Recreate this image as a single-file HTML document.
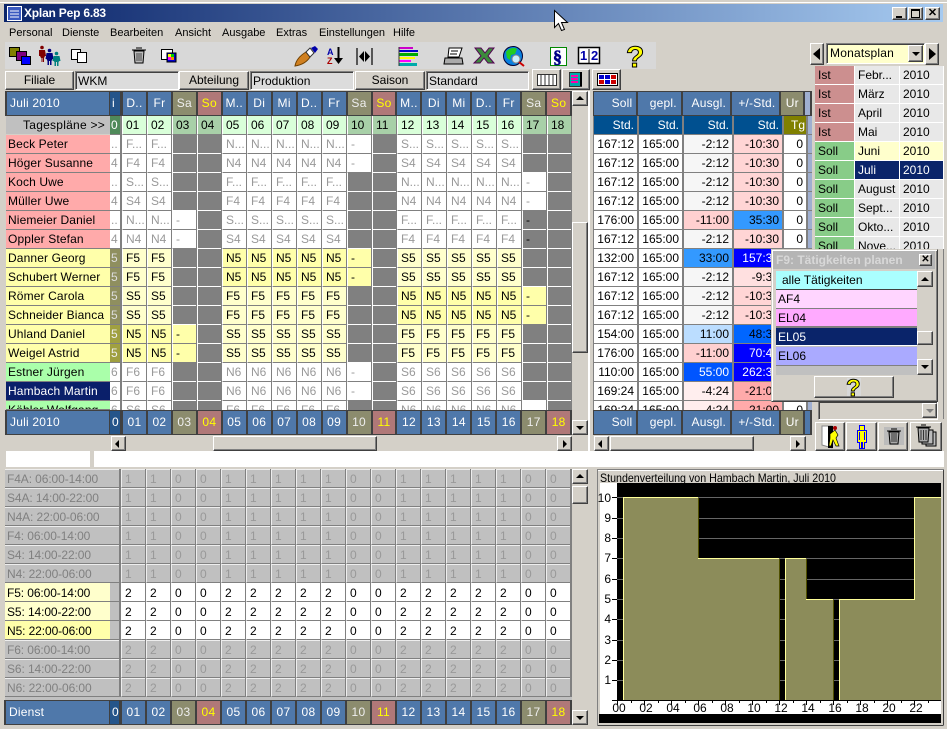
<!DOCTYPE html>
<html><head><meta charset="utf-8"><title>Xplan Pep 6.83</title>
<style>
*{box-sizing:border-box;margin:0;padding:0}
html,body{width:947px;height:729px;overflow:hidden;background:#d4d0c8;font:12px/18px "Liberation Sans",sans-serif;color:#000}
.p{position:absolute}
.btn{position:absolute;background:#d4d0c8;border:1px solid;border-color:#fff #404040 #404040 #fff;box-shadow:inset -1px -1px #808080;text-align:center}
.sunk{position:absolute;background:#dcdcdc;border:1px solid;border-color:#808080 #fff #fff #808080;box-shadow:inset 1px 1px #404040;padding-left:2px}
.m{position:absolute;top:24px;font-size:11px}
.r{position:absolute;display:flex;left:0;height:19px}
.r i{font-style:normal;display:block;width:24px;margin-right:1px;height:19px;background:#fff;border-left:1px solid #fff;border-bottom:1px solid #808080;color:#999;padding-left:3px;overflow:hidden;white-space:nowrap;line-height:18px}
.r i.c{width:10px;margin-right:2px;padding-left:1px;border-left:0}
.r i.g{background:#808080;border-bottom-color:#fff;color:#000}
.r i.a{background:#ffffcc;color:#000}
.r i.n{background:#ffffaa;color:#000}
.r i.d{background:#d9ffd9;color:#000}
.r i.e{background:#a8d0a8;color:#000;border-bottom-color:#808080}
.r i.o{background:#8f8f5f;color:#ddd}
.r i.q{background:#a0a040;color:#eee}
.r i.f{background:#4f8a5a;color:#fff}
.hd{position:absolute;display:flex;background:#404040;height:25px;padding-top:1px}
.hd i{font-style:normal;display:block;width:23px;margin-right:2px;height:23px;background:#4f78aa;color:#fff;text-align:center;line-height:22px;overflow:hidden;white-space:nowrap;letter-spacing:.3px}
.hd i.c{width:10px;margin-right:3px;background:#25558a;text-align:left;padding-left:2px}
.hd i.s{background:#8c8c6e;color:#eee}
.hd i.u{background:#b07878;color:#ff0}
.nm{position:absolute;left:6px;width:104px;height:19px;padding-left:2px;border-bottom:1px solid #808080;line-height:18px;overflow:hidden;white-space:nowrap;letter-spacing:.13px}
.t{position:absolute;display:flex;left:0;height:19px}
.t i{font-style:normal;display:block;height:19px;margin-right:2px;background:#fff;border-bottom:1px solid #808080;text-align:right;padding-right:3px;line-height:18px;overflow:hidden;white-space:nowrap}
.w1{width:43px}.w2{width:43px}.w3{width:48px}.w4{width:48px}.w5{width:22px}.w6{width:5px;background:#9fafd0!important;padding:0!important}
.hr{position:absolute;display:flex;background:#404040;height:25px;padding-top:1px;left:593px;width:219px;padding-left:1px}
.hr i{font-style:normal;display:block;height:23px;margin-right:2px;background:#4f78aa;color:#fff;text-align:right;padding-right:4px;line-height:22px;letter-spacing:.2px}
.mc{position:absolute;height:18px;line-height:19px;padding-left:3px;white-space:nowrap;overflow:hidden}
.ll{position:absolute;left:5px;width:105px;height:19px;background:#c0c0c0;color:#808080;padding-left:2px;border-bottom:1px solid #808080;box-shadow:inset 0 1px #eee;line-height:20px;white-space:nowrap;letter-spacing:-.1px}
.ll.y{box-shadow:none;color:#000}
.lr{position:absolute;display:flex;left:110px;height:19px}
.lr i{font-style:normal;display:block;width:24px;margin-right:1px;height:19px;background:#c0c0c0;color:#999;border-left:1px solid #eee;border-bottom:1px solid #808080;box-shadow:inset 0 1px #eee;padding-left:3px;line-height:20px}
.lr i.c{width:9px;margin-right:2px;border-left:0}
.lr.b i{background:#fff;color:#000;border-left-color:#fff;box-shadow:none}
.lr.b i.c{background:#c0c0c0}
.li{position:absolute;left:0;width:141px;height:19px;padding-left:2px;border-bottom:1px solid #808080;line-height:19px}
.tri{position:absolute;width:0;height:0;border-style:solid}
</style></head><body>
<div class="p" style="left:0;top:0;width:947px;height:2px;background:#d4d0c8"></div>
<div class="p" style="left:0;top:2px;width:947px;height:1px;background:#fff"></div>
<div class="p" style="left:4px;top:4px;width:939px;height:18px;background:linear-gradient(90deg,#0a246a,#a6caf0)"></div>
<svg class="p" style="left:7px;top:6px" width="15" height="15"><rect x=".5" y=".5" width="14" height="14" fill="#3a5ac0" stroke="#fff"/><path d="M3 5h9M3 8h9M3 11h9" stroke="#fff"/></svg>
<div class="p" style="left:24px;top:4px;color:#fff;font-weight:bold;font-size:12px;letter-spacing:-.2px;line-height:18px">Xplan Pep 6.83</div>
<div class="btn" style="left:892px;top:7px;width:15px;height:13px"><div class="p" style="left:3px;top:8px;width:6px;height:2px;background:#000"></div></div>
<div class="btn" style="left:908px;top:7px;width:15px;height:13px"><div class="p" style="left:2px;top:1px;width:9px;height:9px;border:1px solid #000;border-top-width:2px"></div></div>
<div class="btn" style="left:925px;top:7px;width:15px;height:13px;line-height:10px;font-weight:bold;font-size:11px">✕</div>
<div class="m" style="left:9px">Personal</div><div class="m" style="left:62px">Dienste</div><div class="m" style="left:110px">Bearbeiten</div><div class="m" style="left:175px">Ansicht</div><div class="m" style="left:222px">Ausgabe</div><div class="m" style="left:276px">Extras</div><div class="m" style="left:319px">Einstellungen</div><div class="m" style="left:393px">Hilfe</div>

<div class="p" style="left:5px;top:42px;width:651px;height:27px;background:#d8d8d8"></div>
<svg class="p" style="left:0;top:40px" width="660" height="30" viewBox="0 40 660 30">
<rect x="9.500" y="47.500" width="10" height="9" fill="#808000" stroke="#000"/><rect x="16.500" y="51.500" width="10" height="9" fill="#800080" stroke="#000"/><rect x="21.500" y="56.500" width="9" height="8" fill="#00f" stroke="#000"/>
<g><g fill="#800000"><circle cx="42" cy="47.500" r="1.800"/><path d="M39 50h6l1 6h-1l-1 2v4h-1.500v-4h-1v4H41v-4l-1-2h-1z"/></g>
<g fill="#000080"><circle cx="49.500" cy="50.500" r="1.800"/><path d="M46.500 53h6l1 6h-1l-1 2v4H50v-4h-1v4h-1.500v-4l-1-2h-1z"/></g>
<g fill="#008080"><circle cx="56.500" cy="53.500" r="1.800"/><path d="M53.500 56h6l1 5h-1l-1 1v4H57v-4h-1v4h-1.500v-4l-1-1h-1z"/></g></g>
<rect x="71.500" y="49.500" width="9" height="10" fill="#fff" stroke="#000"/><rect x="77.500" y="52.500" width="9" height="10" fill="#fff" stroke="#000"/>
<path d="M134 51h10l-1 12h-8zM132 50h14M136 48h6" fill="#bbb" stroke="#000"/><path d="M137 53v8M139 53v8M141 53v8" stroke="#444"/>
<rect x="161.500" y="49.500" width="11" height="10" fill="#fff" stroke="#000"/><rect x="167" y="53" width="9" height="9" fill="#00c" stroke="#000"/><rect x="168" y="54" width="3" height="3" fill="#ff0"/><rect x="171" y="54" width="3" height="3" fill="#0c0"/><rect x="168" y="57" width="3" height="3" fill="#f0f"/><rect x="171" y="57" width="3" height="3" fill="#f80"/>
<path d="M295 66c1-6 6-11 11-14l4 5c-3 5-9 8-15 9z" fill="#d08020" stroke="#704000"/><path d="M306 52l4-4 4 5-4 4z" fill="#fff" stroke="#333"/><path d="M311 48l4-2 3 3-3 4z" fill="#00a"/>
<text x="327" y="55" font-size="9" font-family="Liberation Sans" font-weight="bold" fill="#00a">A</text><text x="327" y="64" font-size="9" font-family="Liberation Sans" font-weight="bold" fill="#a00">Z</text><path d="M338.500 47v12" stroke="#000" stroke-width="2"/><path d="M334 58h9l-4.500 6z"/>
<path d="M357 48v17M372 48v17" stroke="#000" stroke-width="1.200"/><path d="M359 56.500l5-5.500v11zM370 56.500l-5-5.500v11z"/>
<path d="M399 47h14v2h-14z" fill="#c0c"/><path d="M399 50h19v2h-19z" fill="#00c"/><path d="M399 53h19v3h-19z" fill="#0a0"/><path d="M399 57h16v2h-16z" fill="#ff0"/><path d="M399 60h12v2h-12z" fill="#f0f"/><path d="M399 63h18v3h-18z" fill="#0aa"/><path d="M399 47v19" stroke="#333"/>
<path d="M449 48h13l-3 9h-11z" fill="#fff" stroke="#000"/><path d="M445 58h17l1 6h-19z" fill="#aaa" stroke="#000"/><path d="M451 51h7M450 54h7" stroke="#000"/>
<path d="M475 48h6l4 5 4-5h5l-6 8 6 7h-6l-4-5-4 5h-6l7-7z" fill="#3c8a3c" stroke="#505"/>
<circle cx="513" cy="56" r="9.500" fill="#0a80e0" stroke="#003"/><path d="M506 52c3-4 8-5 11-3l-2 5-4 1-1 5-3-2z" fill="#2c2"/><circle cx="516" cy="59" r="4" fill="#cef" stroke="#888"/><path d="M519 62l5 4" stroke="#c00" stroke-width="2"/>
<rect x="550.500" y="47.500" width="16" height="18" fill="#fff" stroke="#080"/><text x="553" y="63" font-size="18" font-weight="bold" font-family="Liberation Serif" fill="#008" stroke="#008" stroke-width=".6">§</text>
<rect x="578.500" y="47.500" width="21" height="16" fill="#fff" stroke="#000" stroke-width="1.500"/><text x="580" y="60" font-size="13" font-family="Liberation Sans" font-weight="bold" fill="#00a">1</text><text x="591" y="60" font-size="13" font-family="Liberation Sans" font-weight="bold" fill="#00a">2</text><path d="M589 49v14" stroke="#000"/>
<text x="626" y="67" font-size="30" font-weight="bold" font-family="Liberation Sans" fill="#ff0" stroke="#000" stroke-width="1">?</text>
</svg>

<div class="btn" style="left:5px;top:71px;width:69px;height:19px;line-height:16px">Filiale</div>
<div class="sunk" style="left:75px;top:71px;width:104px;height:19px;line-height:18px">WKM</div>
<div class="btn" style="left:179px;top:71px;width:70px;height:19px;line-height:16px">Abteilung</div>
<div class="sunk" style="left:250px;top:71px;width:104px;height:19px;line-height:18px">Produktion</div>
<div class="btn" style="left:355px;top:71px;width:70px;height:19px;line-height:16px">Saison</div>
<div class="sunk" style="left:426px;top:71px;width:103px;height:19px;line-height:18px">Standard</div>
<div class="btn" style="left:532px;top:69px;width:29px;height:21px"><svg width="26" height="16" style="position:absolute;left:1px;top:2px"><rect x="3.500" y="2.500" width="19" height="11" fill="#fff" stroke="#333"/><path d="M7 3v10M11 3v10M15 3v10M19 3v10" stroke="#333"/></svg></div>
<div class="btn" style="left:562px;top:69px;width:28px;height:21px"><svg width="24" height="17" style="position:absolute;left:1px;top:1px"><rect x="5.500" y="1.500" width="12" height="14" fill="#0aa" stroke="#333"/><path d="M7 5h7M7 8h7M7 11h7" stroke="#f0a" stroke-width="2"/><path d="M17 1v14" stroke="#000" stroke-width="2"/></svg></div>
<div class="btn" style="left:592px;top:69px;width:29px;height:21px"><svg width="26" height="17" style="position:absolute;left:1px;top:1px"><rect x="3.500" y="2.500" width="20" height="12" fill="#fff" stroke="#000"/><path d="M5 4h5v4H5zM11 4h5v4h-5z" fill="#00c"/><path d="M17 4h5v4h-5zM5 9h5v4H5zM17 9h5v4h-5z" fill="#c00"/><path d="M11 9h5v4h-5z" fill="#00c"/></svg></div>

<!-- top grid -->
<div class="p" style="left:5px;top:91px;width:106px;height:25px;background:#404040"></div>
<div class="p" style="left:7px;top:92px;width:102px;height:23px;background:#4f78aa;color:#fff;padding-left:3px;line-height:22px;letter-spacing:.2px">Juli 2010</div>
<div class="p" style="left:6px;top:116px;width:104px;height:18px;background:#c0c0c0;text-align:right;padding-right:5px;line-height:18px;letter-spacing:.25px">Tagespläne &gt;&gt;</div>
<div class="nm" style="top:135px;background:#ffaaaa">Beck Peter</div>
<div class="nm" style="top:154px;background:#ffaaaa">Höger Susanne</div>
<div class="nm" style="top:173px;background:#ffaaaa">Koch Uwe</div>
<div class="nm" style="top:192px;background:#ffaaaa">Müller Uwe</div>
<div class="nm" style="top:211px;background:#ffaaaa">Niemeier Daniel</div>
<div class="nm" style="top:230px;background:#ffaaaa">Oppler Stefan</div>
<div class="nm" style="top:249px;background:#ffffaa">Danner Georg</div>
<div class="nm" style="top:268px;background:#ffffaa">Schubert Werner</div>
<div class="nm" style="top:287px;background:#ffffaa">Römer Carola</div>
<div class="nm" style="top:306px;background:#ffffaa">Schneider Bianca</div>
<div class="nm" style="top:325px;background:#ffffaa">Uhland Daniel</div>
<div class="nm" style="top:344px;background:#ffffaa">Weigel Astrid</div>
<div class="nm" style="top:363px;background:#aaffaa">Estner Jürgen</div>
<div class="nm" style="top:382px;background:#0a1f6a;color:#fff">Hambach Martin</div>
<div class="nm" style="top:401px;background:#aaffaa;height:9px">Köhler Wolfgang</div>

<div class="p" style="left:110px;top:91px;width:462px;height:319px;background:#808080;overflow:hidden">
<div class="hd" style="top:0;left:0;width:462px"><i class="c">i</i><i>D..</i><i>Fr</i><i class="s">Sa</i><i class="u">So</i><i>M..</i><i>Di</i><i>Mi</i><i>D..</i><i>Fr</i><i class="s">Sa</i><i class="u">So</i><i>M..</i><i>Di</i><i>Mi</i><i>D..</i><i>Fr</i><i class="s">Sa</i><i class="u">So</i></div>
<div class="r" style="top:25px"><i class="c f">0</i><i class="d">01</i><i class="d">02</i><i class="e">03</i><i class="e">04</i><i class="d">05</i><i class="d">06</i><i class="d">07</i><i class="d">08</i><i class="d">09</i><i class="e">10</i><i class="e">11</i><i class="d">12</i><i class="d">13</i><i class="d">14</i><i class="d">15</i><i class="d">16</i><i class="e">17</i><i class="e">18</i></div>
<div class="r" style="top:44px"><i class="c">..</i><i>F...</i><i>F...</i><i class="g"></i><i class="g"></i><i>N...</i><i>N...</i><i>N...</i><i>N...</i><i>N...</i><i>-</i><i class="g"></i><i>S...</i><i>S...</i><i>S...</i><i>S...</i><i>S...</i><i class="g"></i><i class="g"></i></div>
<div class="r" style="top:63px"><i class="c">4</i><i>F4</i><i>F4</i><i class="g"></i><i class="g"></i><i>N4</i><i>N4</i><i>N4</i><i>N4</i><i>N4</i><i>-</i><i class="g"></i><i>S4</i><i>S4</i><i>S4</i><i>S4</i><i>S4</i><i class="g"></i><i class="g"></i></div>
<div class="r" style="top:82px"><i class="c">..</i><i>S...</i><i>S...</i><i class="g"></i><i class="g"></i><i>F...</i><i>F...</i><i>F...</i><i>F...</i><i>F...</i><i class="g"></i><i class="g"></i><i>N...</i><i>N...</i><i>N...</i><i>N...</i><i>N...</i><i>-</i><i class="g"></i></div>
<div class="r" style="top:101px"><i class="c">4</i><i>S4</i><i>S4</i><i class="g"></i><i class="g"></i><i>F4</i><i>F4</i><i>F4</i><i>F4</i><i>F4</i><i class="g"></i><i class="g"></i><i>N4</i><i>N4</i><i>N4</i><i>N4</i><i>N4</i><i>-</i><i class="g"></i></div>
<div class="r" style="top:120px"><i class="c">..</i><i>N...</i><i>N...</i><i>-</i><i class="g"></i><i>S...</i><i>S...</i><i>S...</i><i>S...</i><i>S...</i><i class="g"></i><i class="g"></i><i>F...</i><i>F...</i><i>F...</i><i>F...</i><i>F...</i><i class="g">-</i><i class="g"></i></div>
<div class="r" style="top:139px"><i class="c">4</i><i>N4</i><i>N4</i><i>-</i><i class="g"></i><i>S4</i><i>S4</i><i>S4</i><i>S4</i><i>S4</i><i class="g"></i><i class="g"></i><i>F4</i><i>F4</i><i>F4</i><i>F4</i><i>F4</i><i class="g">-</i><i class="g"></i></div>
<div class="r" style="top:158px"><i class="c o">5</i><i class="a">F5</i><i class="a">F5</i><i class="g"></i><i class="g"></i><i class="n">N5</i><i class="n">N5</i><i class="n">N5</i><i class="n">N5</i><i class="n">N5</i><i class="n">-</i><i class="g"></i><i class="a">S5</i><i class="a">S5</i><i class="a">S5</i><i class="a">S5</i><i class="a">S5</i><i class="g"></i><i class="g"></i></div>
<div class="r" style="top:177px"><i class="c o">5</i><i class="a">F5</i><i class="a">F5</i><i class="g"></i><i class="g"></i><i class="n">N5</i><i class="n">N5</i><i class="n">N5</i><i class="n">N5</i><i class="n">N5</i><i class="n">-</i><i class="g"></i><i class="a">S5</i><i class="a">S5</i><i class="a">S5</i><i class="a">S5</i><i class="a">S5</i><i class="g"></i><i class="g"></i></div>
<div class="r" style="top:196px"><i class="c o">5</i><i class="a">S5</i><i class="a">S5</i><i class="g"></i><i class="g"></i><i class="a">F5</i><i class="a">F5</i><i class="a">F5</i><i class="a">F5</i><i class="a">F5</i><i class="g"></i><i class="g"></i><i class="n">N5</i><i class="n">N5</i><i class="n">N5</i><i class="n">N5</i><i class="n">N5</i><i class="n">-</i><i class="g"></i></div>
<div class="r" style="top:215px"><i class="c o">5</i><i class="a">S5</i><i class="a">S5</i><i class="g"></i><i class="g"></i><i class="a">F5</i><i class="a">F5</i><i class="a">F5</i><i class="a">F5</i><i class="a">F5</i><i class="g"></i><i class="g"></i><i class="n">N5</i><i class="n">N5</i><i class="n">N5</i><i class="n">N5</i><i class="n">N5</i><i class="n">-</i><i class="g"></i></div>
<div class="r" style="top:234px"><i class="c q">5</i><i class="n">N5</i><i class="n">N5</i><i class="n">-</i><i class="g"></i><i class="a">S5</i><i class="a">S5</i><i class="a">S5</i><i class="a">S5</i><i class="a">S5</i><i class="g"></i><i class="g"></i><i class="a">F5</i><i class="a">F5</i><i class="a">F5</i><i class="a">F5</i><i class="a">F5</i><i class="g"></i><i class="g"></i></div>
<div class="r" style="top:253px"><i class="c q">5</i><i class="n">N5</i><i class="n">N5</i><i class="n">-</i><i class="g"></i><i class="a">S5</i><i class="a">S5</i><i class="a">S5</i><i class="a">S5</i><i class="a">S5</i><i class="g"></i><i class="g"></i><i class="a">F5</i><i class="a">F5</i><i class="a">F5</i><i class="a">F5</i><i class="a">F5</i><i class="g"></i><i class="g"></i></div>
<div class="r" style="top:272px"><i class="c">6</i><i>F6</i><i>F6</i><i class="g"></i><i class="g"></i><i>N6</i><i>N6</i><i>N6</i><i>N6</i><i>N6</i><i>-</i><i class="g"></i><i>S6</i><i>S6</i><i>S6</i><i>S6</i><i>S6</i><i class="g"></i><i class="g"></i></div>
<div class="r" style="top:291px"><i class="c">6</i><i>F6</i><i>F6</i><i class="g"></i><i class="g"></i><i>N6</i><i>N6</i><i>N6</i><i>N6</i><i>N6</i><i>-</i><i class="g"></i><i>S6</i><i>S6</i><i>S6</i><i>S6</i><i>S6</i><i class="g"></i><i class="g"></i></div>
<div class="r" style="top:310px"><i class="c">6</i><i>S6</i><i>S6</i><i class="g"></i><i class="g"></i><i>F6</i><i>F6</i><i>F6</i><i>F6</i><i>F6</i><i class="g"></i><i class="g"></i><i>N6</i><i>N6</i><i>N6</i><i>N6</i><i>N6</i><i></i><i class="g"></i></div>
</div>
<div class="p" style="left:5px;top:410px;width:106px;height:25px;background:#404040"></div>
<div class="p" style="left:7px;top:411px;width:102px;height:23px;background:#4f78aa;color:#fff;padding-left:3px;line-height:22px;letter-spacing:.2px">Juli 2010</div>
<div class="hd" style="top:410px;left:110px;width:462px"><i class="c">0</i><i>01</i><i>02</i><i class="s">03</i><i class="u">04</i><i>05</i><i>06</i><i>07</i><i>08</i><i>09</i><i class="s">10</i><i class="u">11</i><i>12</i><i>13</i><i>14</i><i>15</i><i>16</i><i class="s">17</i><i class="u">18</i></div>

<!-- vertical scrollbar top -->
<div class="btn" style="left:572px;top:91px;width:16px;height:15px"><div class="tri" style="left:3px;top:4px;border-width:0 4px 4px;border-color:transparent transparent #000"></div></div>
<div class="btn" style="left:572px;top:222px;width:16px;height:131px"></div>
<div class="btn" style="left:572px;top:420px;width:16px;height:15px"><div class="tri" style="left:3px;top:5px;border-width:4px 4px 0;border-color:#000 transparent transparent"></div></div>
<div class="p" style="left:588px;top:91px;width:2px;height:360px;background:#fff"></div>
<!-- hscroll -->
<div class="btn" style="left:111px;top:436px;width:15px;height:15px"><div class="tri" style="left:3px;top:3px;border-width:4px 4px 4px 0;border-color:transparent #000"></div></div>
<div class="btn" style="left:213px;top:436px;width:164px;height:15px"></div>
<div class="btn" style="left:557px;top:436px;width:15px;height:15px"><div class="tri" style="left:5px;top:3px;border-width:4px 0 4px 4px;border-color:transparent #000"></div></div>
<div class="btn" style="left:594px;top:436px;width:15px;height:15px"><div class="tri" style="left:3px;top:3px;border-width:4px 4px 4px 0;border-color:transparent #000"></div></div>
<div class="btn" style="left:610px;top:436px;width:144px;height:15px"></div>
<div class="btn" style="left:790px;top:436px;width:16px;height:15px"><div class="tri" style="left:5px;top:3px;border-width:4px 0 4px 4px;border-color:transparent #000"></div></div>

<!-- right table -->
<div class="p" style="left:593px;top:91px;width:219px;height:319px;background:#808080;overflow:hidden">
<div class="t" style="top:25px;left:1px"><i class="w1" style="background:#005090;color:#fff">Std.</i><i class="w2" style="background:#005090;color:#fff">Std.</i><i class="w3" style="background:#005090;color:#fff">Std.</i><i class="w4" style="background:#005090;color:#fff">Std.</i><i class="w5" style="background:#808000;color:#fff;padding-right:1px">Tg</i><i class="w6"></i></div>
<div class="t" style="top:44px;left:1px"><i class="w1">167:12</i><i class="w2">165:00</i><i class="w3" style="background:#f6f6f6">-2:12</i><i class="w4" style="background:#ffd5d5">-10:30</i><i class="w5">0</i><i class="w6"></i></div>
<div class="t" style="top:63px;left:1px"><i class="w1">167:12</i><i class="w2">165:00</i><i class="w3" style="background:#f6f6f6">-2:12</i><i class="w4" style="background:#ffd5d5">-10:30</i><i class="w5">0</i><i class="w6"></i></div>
<div class="t" style="top:82px;left:1px"><i class="w1">167:12</i><i class="w2">165:00</i><i class="w3" style="background:#f6f6f6">-2:12</i><i class="w4" style="background:#ffd5d5">-10:30</i><i class="w5">0</i><i class="w6"></i></div>
<div class="t" style="top:101px;left:1px"><i class="w1">167:12</i><i class="w2">165:00</i><i class="w3" style="background:#f6f6f6">-2:12</i><i class="w4" style="background:#ffd5d5">-10:30</i><i class="w5">0</i><i class="w6"></i></div>
<div class="t" style="top:120px;left:1px"><i class="w1">176:00</i><i class="w2">165:00</i><i class="w3" style="background:#ffd0d0">-11:00</i><i class="w4" style="background:#3399ff">35:30</i><i class="w5">0</i><i class="w6"></i></div>
<div class="t" style="top:139px;left:1px"><i class="w1">167:12</i><i class="w2">165:00</i><i class="w3" style="background:#f6f6f6">-2:12</i><i class="w4" style="background:#ffd5d5">-10:30</i><i class="w5">0</i><i class="w6"></i></div>
<div class="t" style="top:158px;left:1px"><i class="w1">132:00</i><i class="w2">165:00</i><i class="w3" style="background:#3399ff">33:00</i><i class="w4" style="background:#0000ff;color:#fff">157:30</i><i class="w5">0</i><i class="w6"></i></div>
<div class="t" style="top:177px;left:1px"><i class="w1">167:12</i><i class="w2">165:00</i><i class="w3" style="background:#f6f6f6">-2:12</i><i class="w4" style="background:#ffe0e0">-9:30</i><i class="w5">0</i><i class="w6"></i></div>
<div class="t" style="top:196px;left:1px"><i class="w1">167:12</i><i class="w2">165:00</i><i class="w3" style="background:#f6f6f6">-2:12</i><i class="w4" style="background:#ffd5d5">-10:30</i><i class="w5">0</i><i class="w6"></i></div>
<div class="t" style="top:215px;left:1px"><i class="w1">167:12</i><i class="w2">165:00</i><i class="w3" style="background:#f6f6f6">-2:12</i><i class="w4" style="background:#ffd5d5">-10:30</i><i class="w5">0</i><i class="w6"></i></div>
<div class="t" style="top:234px;left:1px"><i class="w1">154:00</i><i class="w2">165:00</i><i class="w3" style="background:#bbddff">11:00</i><i class="w4" style="background:#0066ff">48:30</i><i class="w5">0</i><i class="w6"></i></div>
<div class="t" style="top:253px;left:1px"><i class="w1">176:00</i><i class="w2">165:00</i><i class="w3" style="background:#ffd0d0">-11:00</i><i class="w4" style="background:#0000ff;color:#fff">70:40</i><i class="w5">0</i><i class="w6"></i></div>
<div class="t" style="top:272px;left:1px"><i class="w1">110:00</i><i class="w2">165:00</i><i class="w3" style="background:#0055ff;color:#fff">55:00</i><i class="w4" style="background:#0000ff;color:#fff">262:30</i><i class="w5">0</i><i class="w6"></i></div>
<div class="t" style="top:291px;left:1px"><i class="w1">169:24</i><i class="w2">165:00</i><i class="w3" style="background:#ffeeee">-4:24</i><i class="w4" style="background:#ffaaaa">-21:00</i><i class="w5">0</i><i class="w6"></i></div>
<div class="t" style="top:310px;left:1px"><i class="w1">169:24</i><i class="w2">165:00</i><i class="w3" style="background:#ffeeee">-4:24</i><i class="w4" style="background:#ffaaaa">-21:00</i><i class="w5">0</i><i class="w6"></i></div>
</div>
<div class="hr" style="top:91px"><i class="w1">Soll</i><i class="w2">gepl.</i><i class="w3">Ausgl.</i><i class="w4">+/-Std.</i><i class="w5" style="background:#8c8c6e;text-align:center;padding:0">Ur</i><i class="w6"></i></div>
<div class="hr" style="top:410px"><i class="w1">Soll</i><i class="w2">gepl.</i><i class="w3">Ausgl.</i><i class="w4">+/-Std.</i><i class="w5" style="background:#8c8c6e;text-align:center;padding:0">Ur</i><i class="w6" style="background:#4f78aa!important"></i></div>

<!-- month panel -->
<div class="btn" style="left:810px;top:43px;width:14px;height:22px"><div class="tri" style="left:2px;top:4px;border-width:6px 7px 6px 0;border-color:transparent #000"></div></div>
<div class="sunk" style="left:826px;top:43px;width:99px;height:21px;background:#ffffcc;line-height:19px;padding-left:3px;letter-spacing:.2px">Monatsplan</div>
<div class="btn" style="left:908px;top:45px;width:15px;height:17px"><div class="tri" style="left:3px;top:6px;border-width:4px 4px 0;border-color:#000 transparent transparent"></div></div>
<div class="btn" style="left:925px;top:43px;width:14px;height:22px"><div class="tri" style="left:3px;top:4px;border-width:6px 0 6px 7px;border-color:transparent #000"></div></div>
<div class="p" style="left:815px;top:66px;width:129px;height:183px;background:#fff"></div>
<div class="mc" style="left:815px;top:66px;width:39px;background:#cc8f8f">Ist</div><div class="mc" style="left:855px;top:66px;width:44px;background:#e8e8e8">Febr...</div><div class="mc" style="left:900px;top:66px;width:43px;background:#e8e8e8">2010</div>
<div class="mc" style="left:815px;top:85px;width:39px;background:#cc8f8f">Ist</div><div class="mc" style="left:855px;top:85px;width:44px;background:#e8e8e8">März</div><div class="mc" style="left:900px;top:85px;width:43px;background:#e8e8e8">2010</div>
<div class="mc" style="left:815px;top:104px;width:39px;background:#cc8f8f">Ist</div><div class="mc" style="left:855px;top:104px;width:44px;background:#e8e8e8">April</div><div class="mc" style="left:900px;top:104px;width:43px;background:#e8e8e8">2010</div>
<div class="mc" style="left:815px;top:123px;width:39px;background:#cc8f8f">Ist</div><div class="mc" style="left:855px;top:123px;width:44px;background:#e8e8e8">Mai</div><div class="mc" style="left:900px;top:123px;width:43px;background:#e8e8e8">2010</div>
<div class="mc" style="left:815px;top:142px;width:39px;background:#88cc88">Soll</div><div class="mc" style="left:855px;top:142px;width:44px;background:#ffffcc">Juni</div><div class="mc" style="left:900px;top:142px;width:43px;background:#ffffcc">2010</div>
<div class="mc" style="left:815px;top:161px;width:39px;background:#88cc88">Soll</div><div class="mc" style="left:855px;top:161px;width:44px;background:#0a246a;color:#fff">Juli</div><div class="mc" style="left:900px;top:161px;width:43px;background:#0a246a;color:#fff">2010</div>
<div class="mc" style="left:815px;top:180px;width:39px;background:#88cc88">Soll</div><div class="mc" style="left:855px;top:180px;width:44px;background:#e8e8e8">August</div><div class="mc" style="left:900px;top:180px;width:43px;background:#e8e8e8">2010</div>
<div class="mc" style="left:815px;top:199px;width:39px;background:#88cc88">Soll</div><div class="mc" style="left:855px;top:199px;width:44px;background:#e8e8e8">Sept...</div><div class="mc" style="left:900px;top:199px;width:43px;background:#e8e8e8">2010</div>
<div class="mc" style="left:815px;top:218px;width:39px;background:#88cc88">Soll</div><div class="mc" style="left:855px;top:218px;width:44px;background:#e8e8e8">Okto...</div><div class="mc" style="left:900px;top:218px;width:43px;background:#e8e8e8">2010</div>
<div class="mc" style="left:815px;top:237px;width:39px;background:#88cc88">Soll</div><div class="mc" style="left:855px;top:237px;width:44px;background:#e8e8e8">Nove...</div><div class="mc" style="left:900px;top:237px;width:43px;background:#e8e8e8">2010</div>
<div class="p" style="left:937px;top:249px;width:7px;height:170px;background:#d4d0c8;border-right:1px solid #808080"></div>
<div class="sunk" style="left:818px;top:401px;width:120px;height:19px;background:#d4d0c8"></div>
<div class="btn" style="left:922px;top:403px;width:15px;height:15px"><div class="tri" style="left:3px;top:5px;border-width:4px 4px 0;border-color:#808080 transparent transparent"></div></div>

<!-- bottom right buttons -->
<div class="btn" style="left:815px;top:422px;width:30px;height:29px"><svg width="26" height="25" style="position:absolute;left:1px;top:1px"><path d="M5 2h10v22l-10-3z" fill="#fff" stroke="#888"/><path d="M11 2h5v22h-5z" fill="#000"/><path d="M13 10l5-4 3 5-2 3 3 8h-3l-3-6-2 6h-2l1-8z" fill="#ff0" stroke="#000" stroke-width=".7"/><circle cx="18" cy="4" r="2" fill="#a00"/></svg></div>
<div class="btn" style="left:846px;top:422px;width:31px;height:29px"><svg width="26" height="26" style="position:absolute;left:2px;top:1px"><rect x="10.500" y="1.500" width="5" height="5" fill="#ff0" stroke="#00f"/><path d="M8.500 6.500h9v12h-2v6h-2v-6h-1v6h-2v-6h-2z" fill="#ff0" stroke="#00f"/><path d="M10.500 8v8M15.500 8v8" stroke="#00f"/></svg></div>
<div class="btn" style="left:878px;top:422px;width:30px;height:29px"><svg width="26" height="25" style="position:absolute;left:2px;top:3px"><rect x="3" y="1" width="20" height="18" fill="#bbb"/><path d="M8 6h10l-1 12H9zM6 5h14M10 3h6" fill="#aaa" stroke="#000"/><path d="M11 7v9M13 7v9M15 7v9" stroke="#333"/></svg></div>
<div class="btn" style="left:910px;top:422px;width:32px;height:29px"><svg width="28" height="25" style="position:absolute;left:2px;top:1px"><path d="M13 8h10v14H13z" fill="#bbb" stroke="#000"/><path d="M9 6h11v14H9z" fill="#bbb" stroke="#000"/><path d="M5 4h11l-1 14H6zM3 3h15M8 1h5" fill="#aaa" stroke="#000"/><path d="M8 6v10M10.500 6v10M13 6v10" stroke="#333"/></svg></div>

<!-- dialog -->
<div class="p" style="left:771px;top:249px;width:167px;height:153px;background:#d4d0c8;border:1px solid;border-color:#d4d0c8 #404040 #404040 #d4d0c8;box-shadow:inset 1px 1px #fff,inset -1px -1px #808080"></div>
<div class="p" style="left:773px;top:251px;width:162px;height:18px;background:#b5b5b5;color:#d8d8d8;font-weight:bold;font-size:12px;padding-left:3px;line-height:18px">F9: Tätigkeiten planen</div>
<div class="btn" style="left:919px;top:254px;width:13px;height:12px;line-height:9px;font-size:10px;font-weight:bold">✕</div>
<div class="p" style="left:776px;top:271px;width:141px;height:104px;background:#c0c0c0">
<div class="li" style="top:0;background:#aaffff;padding-left:6px;border-bottom-color:#404040">alle Tätigkeiten</div>
<div class="li" style="top:19px;background:#ffd5ff">AF4</div>
<div class="li" style="top:38px;background:#ffaaff;border-bottom-width:2px">EL04</div>
<div class="li" style="top:57px;height:18px;background:#0a246a;color:#fff;border-bottom-color:#fff">EL05</div>
<div class="li" style="top:76px;background:#aaaaff">EL06</div>
</div>
<div class="btn" style="left:917px;top:271px;width:16px;height:16px"><div class="tri" style="left:3px;top:5px;border-width:0 4px 4px;border-color:transparent transparent #000"></div></div>
<div class="btn" style="left:917px;top:331px;width:16px;height:14px"></div>
<div class="btn" style="left:917px;top:359px;width:16px;height:16px"><div class="tri" style="left:3px;top:5px;border-width:4px 4px 0;border-color:#000 transparent transparent"></div></div>
<div class="btn" style="left:814px;top:376px;width:80px;height:22px"><svg width="70" height="20" style="position:absolute;left:4px;top:0"><rect x="28" y="1" width="14" height="18" fill="#d8d8d8"/><text x="27" y="19" font-size="24" font-weight="bold" font-family="Liberation Sans" fill="#ff0" stroke="#000" stroke-width=".9">?</text></svg></div>

<!-- inputs -->
<div class="p" style="left:6px;top:451px;width:84px;height:16px;background:#fff"></div>
<div class="p" style="left:94px;top:451px;width:850px;height:16px;background:#fff"></div>

<!-- lower grid -->
<div class="p" style="left:110px;top:469px;width:462px;height:231px;background:#808080;overflow:hidden"></div>
<div class="ll" style="top:469px">F4A: 06:00-14:00</div>
<div class="ll" style="top:488px">S4A: 14:00-22:00</div>
<div class="ll" style="top:507px">N4A: 22:00-06:00</div>
<div class="ll" style="top:526px">F4: 06:00-14:00</div>
<div class="ll" style="top:545px">S4: 14:00-22:00</div>
<div class="ll" style="top:564px">N4: 22:00-06:00</div>
<div class="ll y" style="top:583px;background:#ffffcc">F5: 06:00-14:00</div>
<div class="ll y" style="top:602px;background:#ffffcc">S5: 14:00-22:00</div>
<div class="ll y" style="top:621px;background:#ffffaa">N5: 22:00-06:00</div>
<div class="ll" style="top:640px">F6: 06:00-14:00</div>
<div class="ll" style="top:659px">S6: 14:00-22:00</div>
<div class="ll" style="top:678px">N6: 22:00-06:00</div>
<div class="p" style="left:5px;top:697px;width:105px;height:3px;background:#c0c0c0"></div>
<div class="lr" style="top:469px"><i class="c"></i><i>1</i><i>1</i><i>0</i><i>0</i><i>1</i><i>1</i><i>1</i><i>1</i><i>1</i><i>0</i><i>0</i><i>1</i><i>1</i><i>1</i><i>1</i><i>1</i><i>0</i><i>0</i></div>
<div class="lr" style="top:488px"><i class="c"></i><i>1</i><i>1</i><i>0</i><i>0</i><i>1</i><i>1</i><i>1</i><i>1</i><i>1</i><i>0</i><i>0</i><i>1</i><i>1</i><i>1</i><i>1</i><i>1</i><i>0</i><i>0</i></div>
<div class="lr" style="top:507px"><i class="c"></i><i>1</i><i>1</i><i>0</i><i>0</i><i>1</i><i>1</i><i>1</i><i>1</i><i>1</i><i>0</i><i>0</i><i>1</i><i>1</i><i>1</i><i>1</i><i>1</i><i>0</i><i>0</i></div>
<div class="lr" style="top:526px"><i class="c"></i><i>1</i><i>1</i><i>0</i><i>0</i><i>1</i><i>1</i><i>1</i><i>1</i><i>1</i><i>0</i><i>0</i><i>1</i><i>1</i><i>1</i><i>1</i><i>1</i><i>0</i><i>0</i></div>
<div class="lr" style="top:545px"><i class="c"></i><i>1</i><i>1</i><i>0</i><i>0</i><i>1</i><i>1</i><i>1</i><i>1</i><i>1</i><i>0</i><i>0</i><i>1</i><i>1</i><i>1</i><i>1</i><i>1</i><i>0</i><i>0</i></div>
<div class="lr" style="top:564px"><i class="c"></i><i>1</i><i>1</i><i>0</i><i>0</i><i>1</i><i>1</i><i>1</i><i>1</i><i>1</i><i>0</i><i>0</i><i>1</i><i>1</i><i>1</i><i>1</i><i>1</i><i>0</i><i>0</i></div>
<div class="lr b" style="top:583px"><i class="c"></i><i>2</i><i>2</i><i>0</i><i>0</i><i>2</i><i>2</i><i>2</i><i>2</i><i>2</i><i>0</i><i>0</i><i>2</i><i>2</i><i>2</i><i>2</i><i>2</i><i>0</i><i>0</i></div>
<div class="lr b" style="top:602px"><i class="c"></i><i>2</i><i>2</i><i>0</i><i>0</i><i>2</i><i>2</i><i>2</i><i>2</i><i>2</i><i>0</i><i>0</i><i>2</i><i>2</i><i>2</i><i>2</i><i>2</i><i>0</i><i>0</i></div>
<div class="lr b" style="top:621px"><i class="c"></i><i>2</i><i>2</i><i>0</i><i>0</i><i>2</i><i>2</i><i>2</i><i>2</i><i>2</i><i>0</i><i>0</i><i>2</i><i>2</i><i>2</i><i>2</i><i>2</i><i>0</i><i>0</i></div>
<div class="lr" style="top:640px"><i class="c"></i><i>2</i><i>2</i><i>0</i><i>0</i><i>2</i><i>2</i><i>2</i><i>2</i><i>2</i><i>0</i><i>0</i><i>2</i><i>2</i><i>2</i><i>2</i><i>2</i><i>0</i><i>0</i></div>
<div class="lr" style="top:659px"><i class="c"></i><i>2</i><i>2</i><i>0</i><i>0</i><i>2</i><i>2</i><i>2</i><i>2</i><i>2</i><i>0</i><i>0</i><i>2</i><i>2</i><i>2</i><i>2</i><i>2</i><i>0</i><i>0</i></div>
<div class="lr" style="top:678px"><i class="c"></i><i>2</i><i>2</i><i>0</i><i>0</i><i>2</i><i>2</i><i>2</i><i>2</i><i>2</i><i>0</i><i>0</i><i>2</i><i>2</i><i>2</i><i>2</i><i>2</i><i>0</i><i>0</i></div>
<div class="p" style="left:110px;top:697px;width:462px;height:3px;background:#c0c0c0"></div>
<div class="p" style="left:4px;top:700px;width:107px;height:25px;background:#404040"></div>
<div class="p" style="left:6px;top:701px;width:103px;height:23px;background:#4f78aa;color:#fff;padding-left:3px;line-height:22px;letter-spacing:.2px">Dienst</div>
<div class="hd" style="top:700px;left:110px;width:462px"><i class="c" style="width:9px">0</i><i>01</i><i>02</i><i class="s">03</i><i class="u">04</i><i>05</i><i>06</i><i>07</i><i>08</i><i>09</i><i class="s">10</i><i class="u">11</i><i>12</i><i>13</i><i>14</i><i>15</i><i>16</i><i class="s">17</i><i class="u">18</i></div>
<div class="btn" style="left:572px;top:469px;width:16px;height:15px"><div class="tri" style="left:3px;top:4px;border-width:0 4px 4px;border-color:transparent transparent #000"></div></div>
<div class="btn" style="left:572px;top:486px;width:16px;height:18px"></div>
<div class="btn" style="left:572px;top:710px;width:16px;height:15px"><div class="tri" style="left:3px;top:5px;border-width:4px 4px 0;border-color:#000 transparent transparent"></div></div>

<!-- chart -->
<svg class="p" style="left:597px;top:469px" width="347" height="257" viewBox="597 469 347 257" font-family="Liberation Sans" font-size="12">
<rect x="597.500" y="469.500" width="346" height="256" fill="#d4d0c8" stroke="#808080"/>
<path d="M598 725.500h345M943.500 470v255" stroke="#404040"/>
<path d="M598 470.500h345" stroke="#fff"/>
<text x="600" y="482" textLength="236" lengthAdjust="spacingAndGlyphs">Stundenverteilung von Hambach Martin, Juli 2010</text>
<rect x="600" y="483" width="341" height="231" fill="#fff"/>
<rect x="617" y="483" width="324" height="217" fill="#000"/>
<rect x="599" y="714" width="342" height="9" fill="#000"/>
<g stroke="#666">
<path d="M617 497.500h324M617 518.500h324M617 538.500h324M617 558.500h324M617 579.500h324M617 599.500h324M617 619.500h324M617 640.500h324M617 660.500h324M617 680.500h324"/>
</g>
<g fill="#8c8c5a">
<rect x="623" y="497" width="75" height="203"/><rect x="698" y="558" width="81" height="142"/><rect x="785" y="558" width="21" height="142"/><rect x="806" y="599" width="27" height="101"/><rect x="839" y="599" width="75" height="101"/><rect x="914" y="497" width="27" height="203"/>
</g>
<g stroke="#ffff99" fill="none">
<path d="M623.500 700V497.500H698M698 558.500h81M785.500 700V558.500H806M806 599.500h27M839.500 700V599.500H914.500V497.500H941"/>
</g>
<g stroke="#505000" fill="none"><path d="M698.500 498v60M779.500 559v141M806.500 559v40M833.500 600v100"/></g>
<g stroke="#000"><path d="M612 497.500h5M612 518.500h5M612 538.500h5M612 558.500h5M612 579.500h5M612 599.500h5M612 619.500h5M612 640.500h5M612 660.500h5M612 680.500h5M612 700.500h329"/>
<path d="M617.500 700v5M631.500 700v3M644.500 700v5M658.500 700v3M671.500 700v5M685.500 700v3M698.500 700v5M712.500 700v3M725.500 700v5M739.500 700v3M752.500 700v5M766.500 700v3M779.500 700v5M793.500 700v3M806.500 700v5M820.500 700v3M833.500 700v5M847.500 700v3M860.500 700v5M874.500 700v3M887.500 700v5M901.500 700v3M914.500 700v5M928.500 700v3"/></g>
<g text-anchor="end">
<text x="611" y="502">10</text><text x="611" y="522">9</text><text x="611" y="542">8</text><text x="611" y="562">7</text><text x="611" y="583">6</text><text x="611" y="603">5</text><text x="611" y="623">4</text><text x="611" y="644">3</text><text x="611" y="664">2</text><text x="611" y="684">1</text>
</g>
<g text-anchor="middle">
<text x="619" y="712">00</text><text x="646" y="712">02</text><text x="673" y="712">04</text><text x="700" y="712">06</text><text x="727" y="712">08</text><text x="754" y="712">10</text><text x="781" y="712">12</text><text x="808" y="712">14</text><text x="835" y="712">16</text><text x="862" y="712">18</text><text x="889" y="712">20</text><text x="916" y="712">22</text>
</g>
</svg>

<!-- cursor -->
<svg class="p" style="left:553px;top:9px" width="16" height="24"><path d="M1.500 1.500v17l4-4 3 7 3-1-3-7h6z" fill="#fff" stroke="#000"/></svg>
</body></html>
